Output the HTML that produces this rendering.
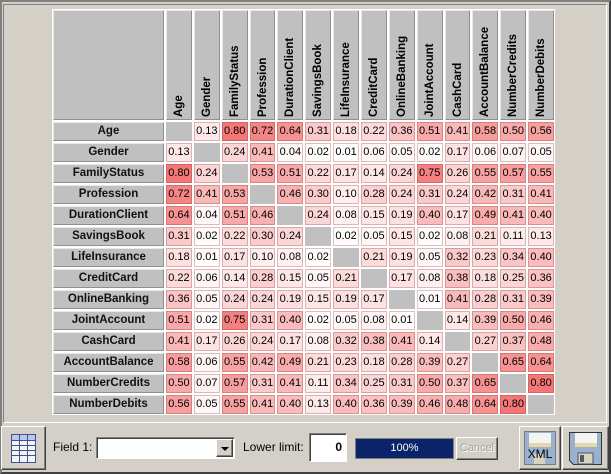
<!DOCTYPE html>
<html><head><meta charset="utf-8"><style>
*{box-sizing:border-box;margin:0;padding:0}
body{width:611px;height:474px;background:#d4d0c8;font-family:Tahoma,"Liberation Sans",sans-serif;position:relative;overflow:hidden}
.frame{position:absolute;left:0;top:0;width:611px;height:474px;border-top:2px solid #808080;border-left:2px solid #808080;border-right:2px solid #404040;border-bottom:2px solid #404040}
.panel{position:absolute;left:3px;top:4px;width:604px;height:419px;border:1px solid #808080;border-right-color:#fff;border-bottom-color:#fff}
.grid{position:absolute;left:52px;top:9px;background:#fff;padding:1px;display:grid;grid-template-columns:111px repeat(14,25.86px);grid-template-rows:110px repeat(14,19px);gap:2px}
.grid div{background:#c0c0c0;position:relative;font-size:11.5px;line-height:17px;text-align:center;border:1px solid #e8e8e8;border-right-color:#909090;border-bottom-color:#909090}
.grid .lab{font-weight:bold;color:#111}
.grid .h span{position:absolute;left:5px;top:106px;transform:rotate(-90deg);transform-origin:0 0;white-space:nowrap;font-weight:bold;font-size:11.5px;line-height:15px}
.grid .c{border:1px solid rgba(150,50,50,.3);font-size:11px;color:#000}
.grid .d{border:1px solid #c0c0c0}
.btn{position:absolute;background:#d4d0c8;border:1px solid;border-color:#fff #404040 #404040 #fff;box-shadow:inset -1px -1px #808080}
.lbl{position:absolute;font-size:12px;color:#000}
</style></head><body>
<div class="frame"></div>
<div class="panel"></div>
<div class="grid" id="g">
<div></div>
<div class="h"><span>Age</span></div><div class="h"><span>Gender</span></div><div class="h"><span>FamilyStatus</span></div><div class="h"><span>Profession</span></div><div class="h"><span>DurationClient</span></div><div class="h"><span>SavingsBook</span></div><div class="h"><span>LifeInsurance</span></div><div class="h"><span>CreditCard</span></div><div class="h"><span>OnlineBanking</span></div><div class="h"><span>JointAccount</span></div><div class="h"><span>CashCard</span></div><div class="h"><span>AccountBalance</span></div><div class="h"><span>NumberCredits</span></div><div class="h"><span>NumberDebits</span></div>
<div class="lab">Age</div><div class="d"></div><div class="c">0.13</div><div class="c">0.80</div><div class="c">0.72</div><div class="c">0.64</div><div class="c">0.31</div><div class="c">0.18</div><div class="c">0.22</div><div class="c">0.36</div><div class="c">0.51</div><div class="c">0.41</div><div class="c">0.58</div><div class="c">0.50</div><div class="c">0.56</div>
<div class="lab">Gender</div><div class="c">0.13</div><div class="d"></div><div class="c">0.24</div><div class="c">0.41</div><div class="c">0.04</div><div class="c">0.02</div><div class="c">0.01</div><div class="c">0.06</div><div class="c">0.05</div><div class="c">0.02</div><div class="c">0.17</div><div class="c">0.06</div><div class="c">0.07</div><div class="c">0.05</div>
<div class="lab">FamilyStatus</div><div class="c">0.80</div><div class="c">0.24</div><div class="d"></div><div class="c">0.53</div><div class="c">0.51</div><div class="c">0.22</div><div class="c">0.17</div><div class="c">0.14</div><div class="c">0.24</div><div class="c">0.75</div><div class="c">0.26</div><div class="c">0.55</div><div class="c">0.57</div><div class="c">0.55</div>
<div class="lab">Profession</div><div class="c">0.72</div><div class="c">0.41</div><div class="c">0.53</div><div class="d"></div><div class="c">0.46</div><div class="c">0.30</div><div class="c">0.10</div><div class="c">0.28</div><div class="c">0.24</div><div class="c">0.31</div><div class="c">0.24</div><div class="c">0.42</div><div class="c">0.31</div><div class="c">0.41</div>
<div class="lab">DurationClient</div><div class="c">0.64</div><div class="c">0.04</div><div class="c">0.51</div><div class="c">0.46</div><div class="d"></div><div class="c">0.24</div><div class="c">0.08</div><div class="c">0.15</div><div class="c">0.19</div><div class="c">0.40</div><div class="c">0.17</div><div class="c">0.49</div><div class="c">0.41</div><div class="c">0.40</div>
<div class="lab">SavingsBook</div><div class="c">0.31</div><div class="c">0.02</div><div class="c">0.22</div><div class="c">0.30</div><div class="c">0.24</div><div class="d"></div><div class="c">0.02</div><div class="c">0.05</div><div class="c">0.15</div><div class="c">0.02</div><div class="c">0.08</div><div class="c">0.21</div><div class="c">0.11</div><div class="c">0.13</div>
<div class="lab">LifeInsurance</div><div class="c">0.18</div><div class="c">0.01</div><div class="c">0.17</div><div class="c">0.10</div><div class="c">0.08</div><div class="c">0.02</div><div class="d"></div><div class="c">0.21</div><div class="c">0.19</div><div class="c">0.05</div><div class="c">0.32</div><div class="c">0.23</div><div class="c">0.34</div><div class="c">0.40</div>
<div class="lab">CreditCard</div><div class="c">0.22</div><div class="c">0.06</div><div class="c">0.14</div><div class="c">0.28</div><div class="c">0.15</div><div class="c">0.05</div><div class="c">0.21</div><div class="d"></div><div class="c">0.17</div><div class="c">0.08</div><div class="c">0.38</div><div class="c">0.18</div><div class="c">0.25</div><div class="c">0.36</div>
<div class="lab">OnlineBanking</div><div class="c">0.36</div><div class="c">0.05</div><div class="c">0.24</div><div class="c">0.24</div><div class="c">0.19</div><div class="c">0.15</div><div class="c">0.19</div><div class="c">0.17</div><div class="d"></div><div class="c">0.01</div><div class="c">0.41</div><div class="c">0.28</div><div class="c">0.31</div><div class="c">0.39</div>
<div class="lab">JointAccount</div><div class="c">0.51</div><div class="c">0.02</div><div class="c">0.75</div><div class="c">0.31</div><div class="c">0.40</div><div class="c">0.02</div><div class="c">0.05</div><div class="c">0.08</div><div class="c">0.01</div><div class="d"></div><div class="c">0.14</div><div class="c">0.39</div><div class="c">0.50</div><div class="c">0.46</div>
<div class="lab">CashCard</div><div class="c">0.41</div><div class="c">0.17</div><div class="c">0.26</div><div class="c">0.24</div><div class="c">0.17</div><div class="c">0.08</div><div class="c">0.32</div><div class="c">0.38</div><div class="c">0.41</div><div class="c">0.14</div><div class="d"></div><div class="c">0.27</div><div class="c">0.37</div><div class="c">0.48</div>
<div class="lab">AccountBalance</div><div class="c">0.58</div><div class="c">0.06</div><div class="c">0.55</div><div class="c">0.42</div><div class="c">0.49</div><div class="c">0.21</div><div class="c">0.23</div><div class="c">0.18</div><div class="c">0.28</div><div class="c">0.39</div><div class="c">0.27</div><div class="d"></div><div class="c">0.65</div><div class="c">0.64</div>
<div class="lab">NumberCredits</div><div class="c">0.50</div><div class="c">0.07</div><div class="c">0.57</div><div class="c">0.31</div><div class="c">0.41</div><div class="c">0.11</div><div class="c">0.34</div><div class="c">0.25</div><div class="c">0.31</div><div class="c">0.50</div><div class="c">0.37</div><div class="c">0.65</div><div class="d"></div><div class="c">0.80</div>
<div class="lab">NumberDebits</div><div class="c">0.56</div><div class="c">0.05</div><div class="c">0.55</div><div class="c">0.41</div><div class="c">0.40</div><div class="c">0.13</div><div class="c">0.40</div><div class="c">0.36</div><div class="c">0.39</div><div class="c">0.46</div><div class="c">0.48</div><div class="c">0.64</div><div class="c">0.80</div><div class="d"></div>
</div>

<div class="btn" style="left:1px;top:426px;width:45px;height:44px">
<svg width="45" height="44" style="position:absolute;left:-1px;top:-1px"><rect x="10.5" y="8.5" width="24" height="28" fill="#eef8ee" stroke="#4a4a9a"/><rect x="10.5" y="8.5" width="24" height="6" fill="#b8c8e8" stroke="#4a4a9a"/><g stroke="#4a4a9a"><line x1="18.5" y1="8" x2="18.5" y2="37"/><line x1="26.5" y1="8" x2="26.5" y2="37"/><line x1="10" y1="19.5" x2="35" y2="19.5"/><line x1="10" y1="24.5" x2="35" y2="24.5"/><line x1="10" y1="29.5" x2="35" y2="29.5"/></g></svg>
</div>
<div class="lbl" style="left:53px;top:440px">Field 1:</div>
<div style="position:absolute;left:96px;top:437px;width:139px;height:22px;background:#fff;border:1px solid;border-color:#808080 #fff #fff #808080;box-shadow:inset 1px 1px #404040">
<div class="btn" style="left:119px;top:1px;width:17px;height:18px"><div style="position:absolute;left:4px;top:7px;width:0;height:0;border-left:4px solid transparent;border-right:4px solid transparent;border-top:4px solid #000"></div></div></div>
<div class="lbl" style="left:243px;top:440px">Lower limit:</div>
<div style="position:absolute;left:309px;top:433px;width:38px;height:29px;background:#fff;border:1px solid;border-color:#808080 #fff #fff #808080;box-shadow:inset 1px 1px #404040;font-size:12px;font-weight:bold;text-align:right;padding:6px 4px 0 0">0</div>
<div style="position:absolute;left:355px;top:438px;width:99px;height:21px;background:#0a246a;border:1px solid #808080;color:#fff;font-size:11px;text-align:center;line-height:19px">100%</div>
<div class="btn" style="left:456px;top:437px;width:42px;height:23px;color:#a0a0a0;font-size:11px;text-align:center;line-height:20px;text-shadow:1px 1px #fff">Cancel</div>
<div class="btn" style="left:519px;top:426px;width:42px;height:44px">
<svg width="40" height="42" style="position:absolute;left:0;top:0"><rect x="4.5" y="4.5" width="31" height="33" fill="#9ab0cc" stroke="#333" stroke-dasharray="1 1"/><rect x="9" y="6" width="22" height="14" fill="#f4f4f4"/><rect x="9" y="16" width="22" height="4" fill="#e8d8a8"/><rect x="14" y="27" width="11" height="10" fill="#d8d4c0"/><text x="20" y="31" font-family="Liberation Sans,sans-serif" font-size="12" text-anchor="middle" fill="#000">XML</text></svg>
</div>
<div class="btn" style="left:562px;top:426px;width:47px;height:44px">
<svg width="45" height="42" style="position:absolute;left:0;top:0"><path d="M6.5 5.5h32v32h-28l-4-4z" fill="#9ab0cc" stroke="#333"/><rect x="12" y="6" width="22" height="14" fill="#f4f4f4"/><rect x="12" y="16" width="22" height="4" fill="#e8d8a8"/><rect x="15" y="26" width="15" height="11" fill="#d8d4c0" stroke="#556"/><rect x="17" y="28" width="4" height="7" fill="#556"/></svg>
</div>
<script>
document.querySelectorAll('#g .c').forEach(function(e){var v=parseFloat(e.textContent);var g=Math.round(255-170*v),r=Math.round(255-15*v);e.style.background='rgb('+r+','+g+','+g+')';});
</script>
</body></html>
